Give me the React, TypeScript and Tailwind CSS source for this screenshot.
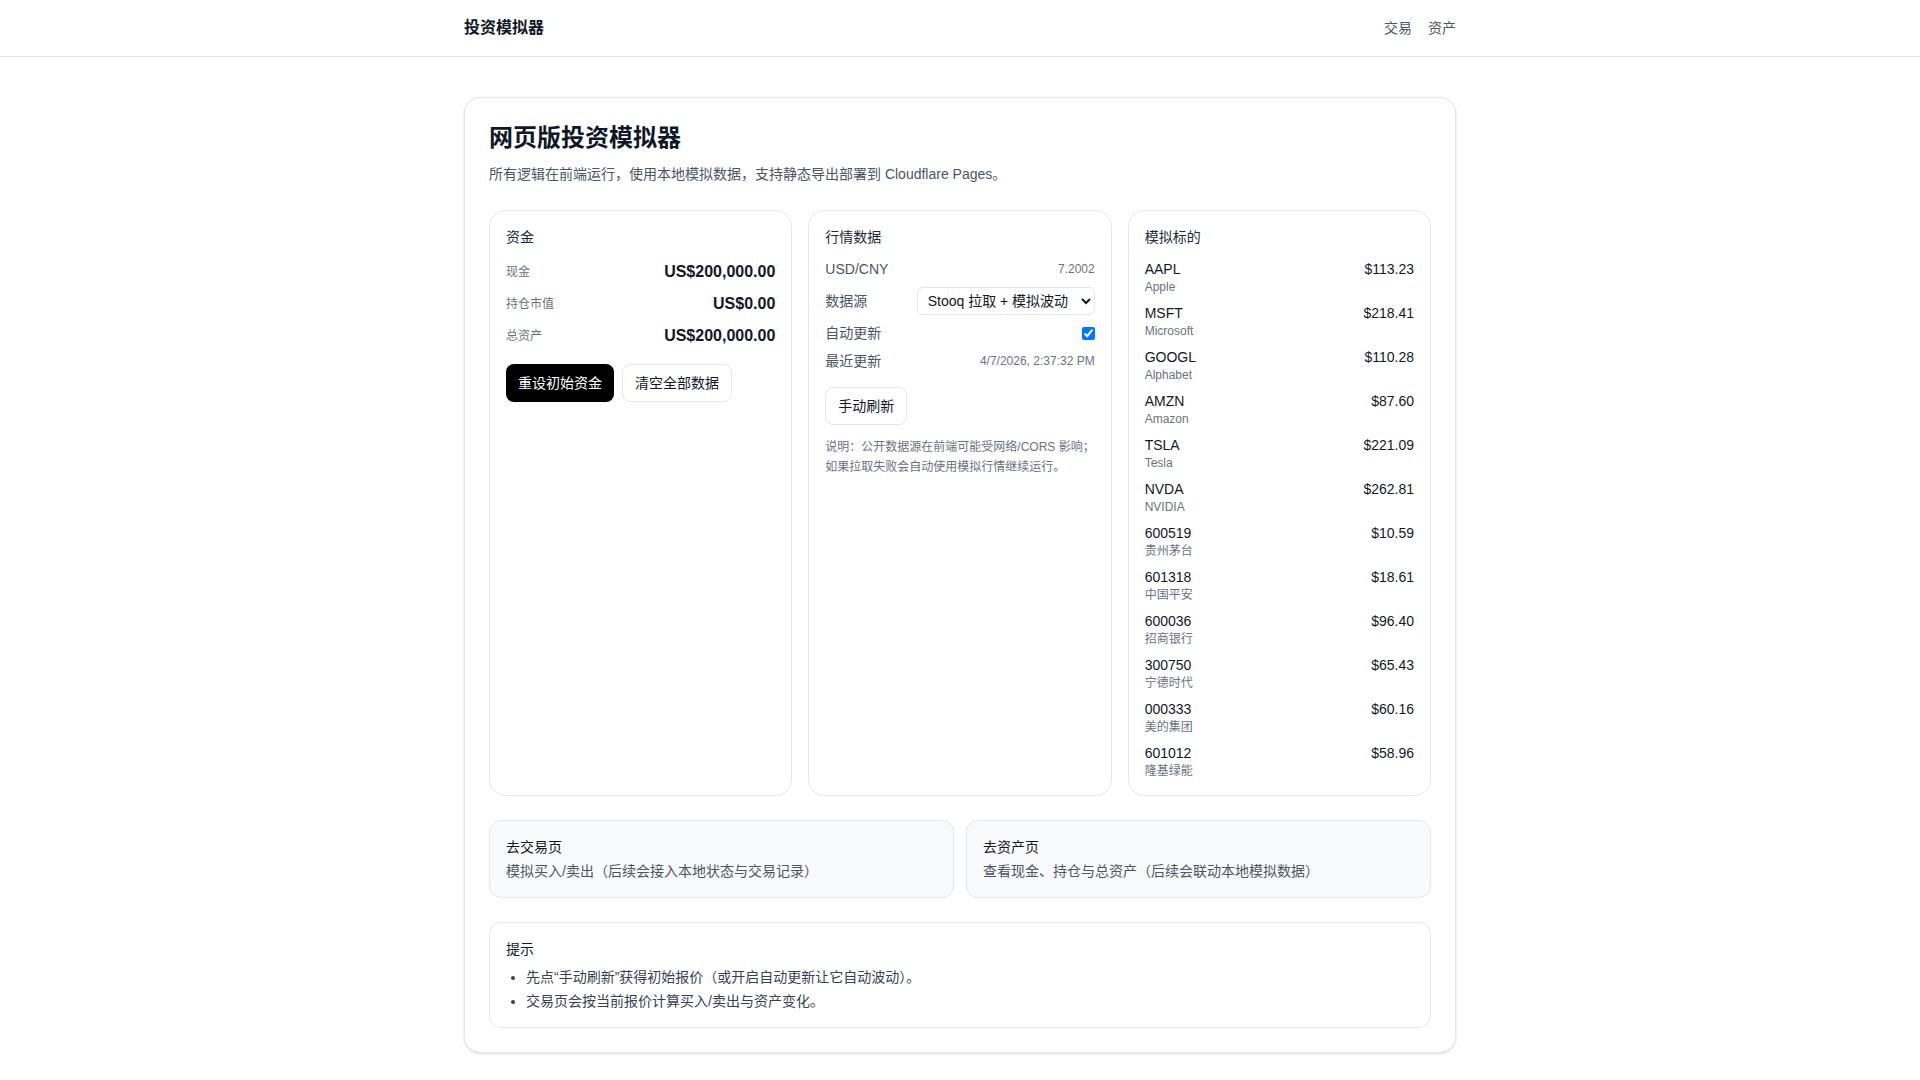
import { useState } from 'react'

const stocks = [
  { symbol: 'AAPL', name: 'Apple', price: 113.23 },
  { symbol: 'MSFT', name: 'Microsoft', price: 218.41 },
  { symbol: 'GOOGL', name: 'Alphabet', price: 110.28 },
  { symbol: 'AMZN', name: 'Amazon', price: 87.6 },
  { symbol: 'TSLA', name: 'Tesla', price: 221.09 },
  { symbol: 'NVDA', name: 'NVIDIA', price: 262.81 },
  { symbol: '600519', name: '贵州茅台', price: 10.59 },
  { symbol: '601318', name: '中国平安', price: 18.61 },
  { symbol: '600036', name: '招商银行', price: 96.4 },
  { symbol: '300750', name: '宁德时代', price: 65.43 },
  { symbol: '000333', name: '美的集团', price: 60.16 },
  { symbol: '601012', name: '隆基绿能', price: 58.96 },
]

const fundRows = [
  { label: '现金', value: 'US$200,000.00' },
  { label: '持仓市值', value: 'US$0.00' },
  { label: '总资产', value: 'US$200,000.00' },
]

export default function App() {
  const [autoUpdate, setAutoUpdate] = useState(true)
  const [source, setSource] = useState('stooq')

  return (
    <div className="min-h-screen bg-white text-gray-900 font-['Liberation_Sans','Noto_Sans_CJK_SC',sans-serif]">
      <header className="border-b border-gray-200">
        <div className="mx-auto flex h-14 max-w-5xl items-center justify-between px-4">
          <span className="text-base font-bold">投资模拟器</span>
          <nav className="flex items-center gap-4 text-sm text-gray-600">
            <a href="#trade">交易</a>
            <a href="#assets">资产</a>
          </nav>
        </div>
      </header>

      <main className="mx-auto max-w-5xl px-4 py-10">
        <div className="rounded-2xl border border-gray-200 bg-white p-6 shadow-sm">
          <h1 className="text-2xl font-bold">网页版投资模拟器</h1>
          <p className="mt-2 text-sm leading-6 text-gray-600">
            所有逻辑在前端运行，使用本地模拟数据，支持静态导出部署到 Cloudflare Pages。
          </p>

          <div className="mt-6 grid grid-cols-3 gap-4">
            <section className="rounded-2xl border border-gray-200 p-4">
              <h2 className="text-sm text-gray-800">资金</h2>
              <div className="mt-3 space-y-2 pt-px">
                {fundRows.map((row) => (
                  <div key={row.label} className="flex h-6 items-center justify-between">
                    <span className="text-xs text-gray-500">{row.label}</span>
                    <span className="text-base font-bold">{row.value}</span>
                  </div>
                ))}
              </div>
              <div className="mt-4 flex gap-2">
                <button className="rounded-lg bg-black px-3 py-[9px] text-sm text-white">
                  重设初始资金
                </button>
                <button className="rounded-lg border border-gray-200 bg-white px-3 py-2 text-sm">
                  清空全部数据
                </button>
              </div>
            </section>

            <section className="rounded-2xl border border-gray-200 p-4">
              <h2 className="text-sm text-gray-800">行情数据</h2>
              <div className="mt-3 space-y-2 text-sm text-gray-600">
                <div className="flex h-5 items-center justify-between">
                  <span>USD/CNY</span>
                  <span className="text-xs text-gray-500">7.2002</span>
                </div>
                <div className="flex items-center justify-between">
                  <span>数据源</span>
                  <select
                    value={source}
                    onChange={(e) => setSource(e.target.value)}
                    className="h-[28px] w-[178px] rounded-md border border-gray-200 bg-white pl-1.5 pr-1 text-sm text-gray-900"
                  >
                    <option value="stooq">Stooq 拉取 + 模拟波动</option>
                    <option value="mock">仅模拟波动</option>
                  </select>
                </div>
                <div className="flex h-5 items-center justify-between">
                  <span>自动更新</span>
                  <input
                    type="checkbox"
                    checked={autoUpdate}
                    onChange={(e) => setAutoUpdate(e.target.checked)}
                    className="m-0 h-[13px] w-[13px]"
                  />
                </div>
                <div className="flex h-5 items-center justify-between">
                  <span>最近更新</span>
                  <span className="text-xs text-gray-500">4/7/2026, 2:37:32 PM</span>
                </div>
              </div>
              <button className="mt-4 rounded-lg border border-gray-200 bg-white px-3 py-2 text-sm">
                手动刷新
              </button>
              <p className="mt-3 text-xs leading-5 text-gray-500">
                说明：公开数据源在前端可能受网络/CORS 影响；
                <br />
                如果拉取失败会自动使用模拟行情继续运行。
              </p>
            </section>

            <section className="rounded-2xl border border-gray-200 p-4">
              <h2 className="text-sm text-gray-800">模拟标的</h2>
              <ul className="mt-3 space-y-2">
                {stocks.map((s) => (
                  <li key={s.symbol} className="flex items-start justify-between">
                    <div>
                      <div className="text-sm">{s.symbol}</div>
                      <div className="text-xs text-gray-500">{s.name}</div>
                    </div>
                    <div className="text-sm">${s.price.toFixed(2)}</div>
                  </li>
                ))}
              </ul>
            </section>
          </div>

          <div className="mt-6 grid grid-cols-2 gap-3">
            <a href="#trade" className="rounded-xl border border-gray-200 bg-gray-50 p-4">
              <div className="text-sm">去交易页</div>
              <div className="mt-1 text-sm text-gray-600">模拟买入/卖出（后续会接入本地状态与交易记录）</div>
            </a>
            <a href="#assets" className="rounded-xl border border-gray-200 bg-gray-50 p-4">
              <div className="text-sm">去资产页</div>
              <div className="mt-1 text-sm text-gray-600">查看现金、持仓与总资产（后续会联动本地模拟数据）</div>
            </a>
          </div>

          <div className="mt-6 rounded-xl border border-gray-200 p-4">
            <div className="text-sm">提示</div>
            <ul className="mt-2 list-disc space-y-1 pl-5 text-sm text-gray-700">
              <li>先点“手动刷新”获得初始报价（或开启自动更新让它自动波动）。</li>
              <li>交易页会按当前报价计算买入/卖出与资产变化。</li>
            </ul>
          </div>
        </div>
      </main>
    </div>
  )
}
